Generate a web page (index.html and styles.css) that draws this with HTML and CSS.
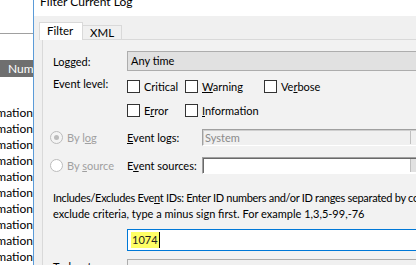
FILE: index.html
```html
<!DOCTYPE html>
<html lang="en">
<head>
    <meta charset="UTF-8">
    <title>Filter Current Log</title>
    <link rel="stylesheet" href="styles.css">
</head>
<body>
<div class="screen">
    <!-- Event list behind the dialog -->
    <aside class="list">
        <div class="list-top"></div>
        <div class="list-head">Number</div>
        <div class="list-rows">
            <div class="list-row"><span>Information</span></div>
            <div class="list-row"><span>Information</span></div>
            <div class="list-row"><span>Information</span></div>
            <div class="list-row"><span>Information</span></div>
            <div class="list-row"><span>Information</span></div>
            <div class="list-row"><span>Information</span></div>
            <div class="list-row"><span>Information</span></div>
            <div class="list-row"><span>Information</span></div>
            <div class="list-row"><span>Information</span></div>
            <div class="list-row"><span>Information</span></div>
        </div>
    </aside>

    <!-- Filter dialog -->
    <section class="dialog">
        <div class="title"><span>Filter Current Log</span></div>
        <div class="body">
            <div class="tabs">
                <div class="tab active">Filter</div>
                <div class="tab">XML</div>
            </div>
            <div class="page">
                <div class="field-row logged-row">
                    <span class="label">Logged:</span>
                    <div class="select">Any time</div>
                </div>

                <div class="field-row level-row">
                    <span class="label">Event level:</span>
                    <div class="checks">
                        <label class="check"><span class="box"></span>Critical</label>
                        <label class="check"><span class="box"></span><span><u>W</u>arning</span></label>
                        <label class="check"><span class="box"></span><span>Ve<u>r</u>bose</span></label>
                        <label class="check"><span class="box"></span><span>E<u>r</u>ror</span></label>
                        <label class="check"><span class="box"></span><span><u>I</u>nformation</span></label>
                    </div>
                </div>

                <div class="source-grid">
                    <label class="radio disabled"><span class="dot checked"></span><span>By l<u>o</u>g</span></label>
                    <span class="label"><u>E</u>vent logs:</span>
                    <div class="combo disabled"><span class="combo-text">System</span><span class="combo-btn"><span class="arrow"></span></span></div>

                    <label class="radio disabled"><span class="dot"></span><span>By <u>s</u>ource</span></label>
                    <span class="label">E<u>v</u>ent sources:</span>
                    <div class="combo"><span class="combo-text"></span><span class="combo-btn"><span class="arrow"></span></span></div>
                </div>

                <p class="hint"><span class="hint-first">Includes/Excludes Eve<u>n</u>t IDs: Enter ID numbers and/or ID ranges separated by commas. To</span><br>exclude criteria, type a minus sign first. For example 1,3,5-99,-76</p>

                <div class="id-input"><span class="selected">1074</span><span class="caret"></span></div>

                <div class="field-row task-row">
                    <span class="label">Task category:</span>
                    <div class="select task"></div>
                </div>
            </div>
        </div>
    </section>
</div>
</body>
</html>
```

FILE: styles.css
```css
:root {
    --face: #f0f0f0;
    --tab-border: #d9d9d9;
    --control: #adadad;
    --accent: #0078d7;
    --disabled: #a0a0a0;
}

body {
    margin: 0;
    font-family: Lato, "Open Sans", sans-serif;
    font-size: 11px;
    color: #000;
}

u {
    text-decoration-thickness: 1px;
    text-underline-offset: 1px;
}

.screen {
    display: flex;
    width: 416px;
    height: 265px;
    overflow: hidden;
    background: #fff;
}

/* list behind */

.list {
    flex: none;
    width: 33px;
    overflow: hidden;
    background: #fff;
}

.list-top {
    height: 33px;
    border-bottom: 1px solid #a0a0a0;
}

.list-head {
    margin-top: 26px;
    height: 17px;
    line-height: 17px;
    padding-left: 8px;
    background: #6f6f6f;
    color: #fff;
    white-space: nowrap;
    font-size: 12px;
}

.list-rows {
    margin-top: 28px;
}

.list-row {
    display: flex;
    justify-content: flex-end;
    height: 16px;
    line-height: 16px;
    white-space: nowrap;
    font-size: 12px;
}

.list-row span {
    flex: none;
}

/* dialog */

.dialog {
    flex: 1;
    min-width: 0;
    display: flex;
    flex-direction: column;
    border-left: 1px solid #5b9bd8;
}

.title {
    flex: none;
    height: 16px;
    padding-left: 6px;
    overflow: hidden;
    background: #fff;
    font-size: 12px;
}

.title span {
    display: block;
    margin-top: -6px;
    line-height: 16px;
    white-space: nowrap;
}

.body {
    flex: none;
    background: var(--face);
    padding: 6px 0 0 5px;
}

.tabs {
    display: flex;
    align-items: flex-end;
    position: relative;
    z-index: 1;
    margin-bottom: -1px;
}

.tab {
    box-sizing: border-box;
    height: 15px;
    line-height: 14px;
    padding: 0 7px;
    border: 1px solid var(--tab-border);
    border-left: none;
    background: var(--face);
    font-size: 11.5px;
}

.tab.active {
    width: 44px;
    height: 18px;
    line-height: 16px;
    border-left: 1px solid var(--tab-border);
    border-bottom: none;
    background: #fff;
}

.page {
    margin-left: 3px;
    margin-right: -24px;
    padding: 11px 12px 0 10px;
    border-top: 1px solid var(--tab-border);
    border-left: 1px solid var(--tab-border);
    background: #f2f2f2;
}

.field-row {
    display: grid;
    grid-template-columns: 74px 1fr;
    align-items: center;
}

.label {
    white-space: nowrap;
}

.select {
    box-sizing: border-box;
    height: 20px;
    line-height: 18px;
    padding-left: 3px;
    border: 1px solid var(--control);
    background: #e1e1e1;
}

/* checkboxes */

.level-row {
    margin-top: 9px;
    align-items: start;
}

.level-row .label {
    line-height: 13px;
    margin-top: -3px;
}

.checks {
    display: grid;
    grid-template-columns: 58px 79px auto;
    row-gap: 11px;
}

.check {
    display: flex;
    align-items: center;
    gap: 4px;
    height: 13px;
    white-space: nowrap;
}

.box {
    box-sizing: border-box;
    flex: none;
    width: 13px;
    height: 13px;
    border: 1px solid #333;
    background: #fff;
}

/* source section */

.source-grid {
    display: grid;
    grid-template-columns: 77px 75px 1fr;
    grid-auto-rows: 17px;
    row-gap: 11px;
    align-items: center;
    margin: 12px 0 0 -3px;
}

.radio {
    display: flex;
    align-items: center;
    gap: 4px;
    white-space: nowrap;
}

.radio.disabled {
    color: var(--disabled);
}

.dot {
    box-sizing: border-box;
    display: flex;
    align-items: center;
    justify-content: center;
    width: 13px;
    height: 13px;
    border: 1px solid #bcbcbc;
    border-radius: 50%;
    background: #fff;
}

.dot.checked {
    background: #f4f4f4;
}

.dot.checked::after {
    content: "";
    width: 5px;
    height: 5px;
    border-radius: 50%;
    background: #bcbcbc;
}

.combo {
    box-sizing: border-box;
    display: flex;
    height: 17px;
    border: 1px solid;
    border-color: #a0a0a0 #fff #fff #a0a0a0;
    background: #fff;
    box-shadow: inset 1px 1px 0 #696969;
}

.combo.disabled {
    background: var(--face);
    box-shadow: inset 1px 1px 0 #cfcfcf;
    color: #8a8a8a;
}

.combo-text {
    flex: 1;
    line-height: 15px;
    padding-left: 2px;
}

.combo-btn {
    flex: none;
    display: flex;
    align-items: center;
    justify-content: center;
    width: 16px;
    margin: 1px 0 1px 1px;
    background: #e1e1e1;
    border-left: 1px solid #bfbfbf;
}

.combo.disabled .combo-btn {
    background: var(--face);
}

.arrow {
    width: 0;
    height: 0;
    border-left: 3px solid transparent;
    border-right: 3px solid transparent;
    border-top: 2px solid #000;
}

.combo.disabled .arrow {
    border-top-color: #a0a0a0;
}

/* event ids */

.hint {
    margin: 16px 0 0;
    line-height: 16px;
    white-space: nowrap;
}

.hint-first {
    letter-spacing: -0.3px;
}

.id-input {
    box-sizing: border-box;
    display: flex;
    align-items: center;
    height: 22px;
    margin: 7px 0 0 74px;
    padding-left: 3px;
    border: 1px solid var(--accent);
    background: #fff;
}

.selected {
    background: #ffff66;
    color: #222;
    line-height: 16px;
    padding: 0 1px;
}

.caret {
    width: 1px;
    height: 16px;
    background: #000;
}

.task-row {
    margin-top: 8px;
    align-items: start;
}

.task-row .label {
    margin-top: 1px;
}

.select.task {
    background: var(--face);
}
```
